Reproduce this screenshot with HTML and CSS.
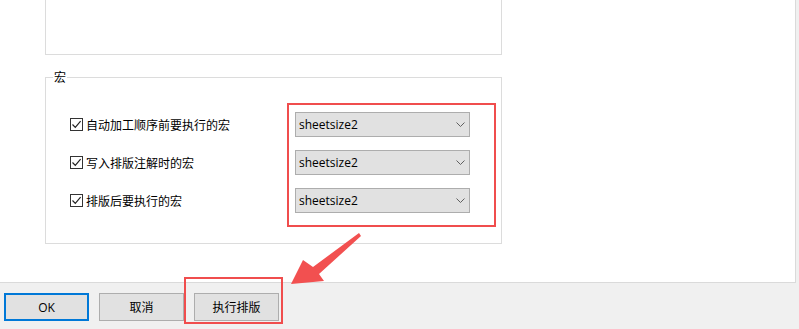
FILE: index.html
```html
<!DOCTYPE html>
<html lang="zh-CN">
<head>
<meta charset="utf-8">
<title>排版设置</title>
<link rel="stylesheet" href="styles.css">
</head>
<body>
<div class="panel">
  <div class="group group-top"></div>
  <div class="group group-macro">
    <span class="legend">宏</span>
    <div class="labels">
      <label class="row"><span class="check"><svg viewBox="0 0 11 11" width="11" height="11"><path d="M1.5 5.5 L4.3 8.4 L9.6 2.2" fill="none" stroke="#222" stroke-width="1.2"/></svg></span>自动加工顺序前要执行的宏</label>
      <label class="row"><span class="check"><svg viewBox="0 0 11 11" width="11" height="11"><path d="M1.5 5.5 L4.3 8.4 L9.6 2.2" fill="none" stroke="#222" stroke-width="1.2"/></svg></span>写入排版注解时的宏</label>
      <label class="row"><span class="check"><svg viewBox="0 0 11 11" width="11" height="11"><path d="M1.5 5.5 L4.3 8.4 L9.6 2.2" fill="none" stroke="#222" stroke-width="1.2"/></svg></span>排版后要执行的宏</label>
    </div>
    <div class="redbox">
      <div class="combo"><span>sheetsize2</span><svg class="chev" viewBox="0 0 9 5" width="9" height="5"><path d="M0.5 0.5 L4.5 4.5 L8.5 0.5" fill="none" stroke="#606060" stroke-width="1"/></svg></div>
      <div class="combo"><span>sheetsize2</span><svg class="chev" viewBox="0 0 9 5" width="9" height="5"><path d="M0.5 0.5 L4.5 4.5 L8.5 0.5" fill="none" stroke="#606060" stroke-width="1"/></svg></div>
      <div class="combo"><span>sheetsize2</span><svg class="chev" viewBox="0 0 9 5" width="9" height="5"><path d="M0.5 0.5 L4.5 4.5 L8.5 0.5" fill="none" stroke="#606060" stroke-width="1"/></svg></div>
    </div>
  </div>
</div>
<div class="footer">
  <button class="btn primary">OK</button>
  <button class="btn">取消</button>
  <div class="highlight"><button class="btn">执行排版</button></div>
</div>
<svg class="arrow" width="799" height="329" viewBox="0 0 799 329">
  <polygon points="291,284 303,260 313,267 359,233 361,236 319,274 324,281" fill="#f25050"/>
</svg>
</body>
</html>
```
FILE: styles.css
```css
html, body {
  margin: 0;
  padding: 0;
}
body {
  width: 799px;
  height: 329px;
  overflow: hidden;
  background: #f0f0f0;
  position: relative;
  font-family: "Open Sans", "Noto Sans CJK SC", sans-serif;
  font-size: 12px;
  color: #000;
}
.panel {
  box-sizing: border-box;
  width: 796px;
  height: 283px;
  background: #fff;
  border-right: 1px solid #dadada;
  border-bottom: 1px solid #dadada;
  padding-left: 45px;
}
.group {
  box-sizing: border-box;
  width: 457px;
  border: 1px solid #dcdcdc;
}
.group-top {
  height: 55px;
  border-top: none;
}
.group-macro {
  margin-top: 22px;
  height: 167px;
  position: relative;
  display: flex;
  align-items: flex-start;
  padding: 25px 0 0 24px;
}
.legend {
  position: absolute;
  top: -8px;
  left: 7px;
  padding: 0 1px;
  background: #fff;
  font-family: "Noto Sans CJK SC", sans-serif;
  font-size: 12px;
  line-height: 14px;
}
.labels {
  width: 217px;
  margin-top: 9px;
  display: flex;
  flex-direction: column;
  gap: 13px;
}
.row {
  height: 25px;
  display: flex;
  align-items: center;
  font-family: "Noto Sans CJK SC", sans-serif;
  font-size: 12px;
  line-height: 14px;
}
.check {
  box-sizing: border-box;
  width: 13px;
  height: 13px;
  border: 1px solid #333;
  background: #fff;
  margin-right: 3px;
  display: flex;
  align-items: center;
  justify-content: center;
}
.check svg {
  display: block;
}
.redbox {
  border: 2px solid #f04d4d;
  padding: 7px 24px 12px 6px;
  display: flex;
  flex-direction: column;
  gap: 13px;
}
.combo {
  box-sizing: border-box;
  width: 175px;
  height: 25px;
  background: #e1e1e1;
  border: 1px solid #adadad;
  display: flex;
  align-items: center;
  justify-content: space-between;
  padding: 0 4px 0 3px;
  font-family: "Open Sans", sans-serif;
  font-size: 12px;
  line-height: 16px;
}
.chev {
  display: block;
}
.footer {
  display: flex;
  align-items: flex-start;
  gap: 10px;
  padding: 10px 0 0 4px;
}
.btn {
  box-sizing: border-box;
  width: 85px;
  height: 28px;
  margin: 0;
  padding: 0;
  background: #e1e1e1;
  border: 1px solid #adadad;
  font-family: "Open Sans", "Noto Sans CJK SC", sans-serif;
  font-size: 12px;
  color: #000;
  display: block;
}
.btn.primary {
  border-color: #0078d7;
  box-shadow: inset 0 0 0 1px #0078d7;
}
.highlight {
  position: relative;
}
.highlight::after {
  content: "";
  position: absolute;
  left: -10px;
  right: -4px;
  top: -16px;
  bottom: -3px;
  border: 2px solid #f04d4d;
  pointer-events: none;
}
.arrow {
  position: absolute;
  left: 0;
  top: 0;
  pointer-events: none;
}
```
